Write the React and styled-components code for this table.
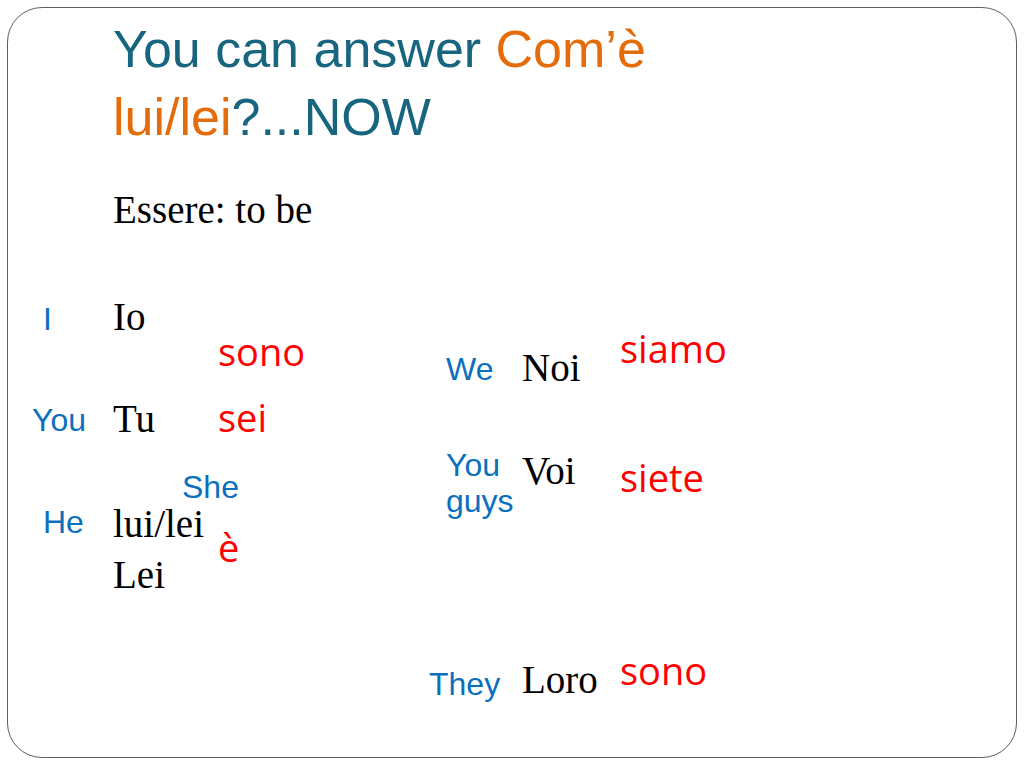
import React from "react";
import styled, { createGlobalStyle } from "styled-components";

const GlobalStyle = createGlobalStyle`
  html, body { margin: 0; padding: 0; background: #ffffff; }
  body { width: 1024px; height: 768px; overflow: hidden; }
`;

const Page = styled.div`
  box-sizing: border-box;
  width: 1024px;
  height: 768px;
  padding: 7px 7px 10px 7px;
  background: #ffffff;
`;

const Frame = styled.div`
  box-sizing: border-box;
  width: 1010px;
  height: 751px;
  border: 1.4px solid #5e5e5e;
  border-radius: 35px;
  padding: 7px 0 0 0;
  display: flex;
  flex-direction: column;
`;

const Title = styled.h1`
  margin: 0;
  padding-left: 105px;
  font-family: "Liberation Sans", Arial, sans-serif;
  font-weight: 400;
  font-size: 52px;
  line-height: 68px;
  color: #17657e;
`;

const TitleLine = styled.div`
  white-space: nowrap;
`;

const Accent = styled.span`
  color: #e46c0a;
`;

const Subtitle = styled.p`
  margin: 39px 0 0 0;
  padding-left: 105px;
  font-family: "Liberation Serif", "Times New Roman", serif;
  font-size: 39px;
  line-height: 39px;
  color: #000000;
`;

const Table = styled.div`
  margin-top: 61px;
  padding-left: 22px;
  display: flex;
  align-items: flex-start;
`;

const Column = styled.div`
  width: ${(p) => p.$width}px;
  flex: none;
  display: flex;
  flex-direction: column;
  align-items: flex-start;
`;

const English = styled.div`
  margin-top: ${(p) => p.$mt || 0}px;
  margin-left: ${(p) => p.$ml || 0}px;
  font-family: "Liberation Sans", Arial, sans-serif;
  font-size: 32px;
  line-height: ${(p) => p.$lh || 32}px;
  color: #0b6fbe;
  white-space: nowrap;
`;

const Italian = styled.div`
  margin-top: ${(p) => p.$mt || 0}px;
  font-family: "Liberation Serif", "Times New Roman", serif;
  font-size: 39px;
  line-height: 39px;
  color: #000000;
  white-space: nowrap;
`;

const Verb = styled.div`
  margin-top: ${(p) => p.$mt || 0}px;
  font-family: "Open Sans", "DejaVu Sans", sans-serif;
  font-size: 38px;
  line-height: 38px;
  color: #ff0000;
  white-space: nowrap;
`;

export default function App() {
  return (
    <>
      <GlobalStyle />
      <Page>
        <Frame>
          <Title>
            <TitleLine>
              You can answer <Accent>Com’è</Accent>
            </TitleLine>
            <TitleLine>
              <Accent>lui/lei</Accent>?...NOW
            </TitleLine>
          </Title>
          <Subtitle>Essere: to be</Subtitle>
          <Table>
            <Column $width={83}>
              <English $mt={13} $ml={13}>I</English>
              <English $mt={69} $ml={2}>You</English>
              <English $mt={70} $ml={13}>He</English>
            </Column>
            <Column $width={105}>
              <Italian $mt={7}>Io</Italian>
              <Italian $mt={63}>Tu</Italian>
              <Italian $mt={66}>lui/lei</Italian>
              <Italian $mt={12}>Lei</Italian>
            </Column>
            <Column $width={211}>
              <Verb $mt={42}>sono</Verb>
              <Verb $mt={28}>sei</Verb>
              <English $mt={35} $ml={-36}>She</English>
              <Verb $mt={25}>è</Verb>
            </Column>
            <Column $width={93}>
              <English $mt={63} $ml={17}>We</English>
              <English $mt={62} $ml={17} $lh={36}>
                You
                <br />
                guys
              </English>
              <English $mt={149}>They</English>
            </Column>
            <Column $width={98}>
              <Italian $mt={58}>Noi</Italian>
              <Italian $mt={64}>Voi</Italian>
              <Italian $mt={170}>Loro</Italian>
            </Column>
            <Column $width={200}>
              <Verb $mt={39}>siamo</Verb>
              <Verb $mt={91}>siete</Verb>
              <Verb $mt={155}>sono</Verb>
            </Column>
          </Table>
        </Frame>
      </Page>
    </>
  );
}
